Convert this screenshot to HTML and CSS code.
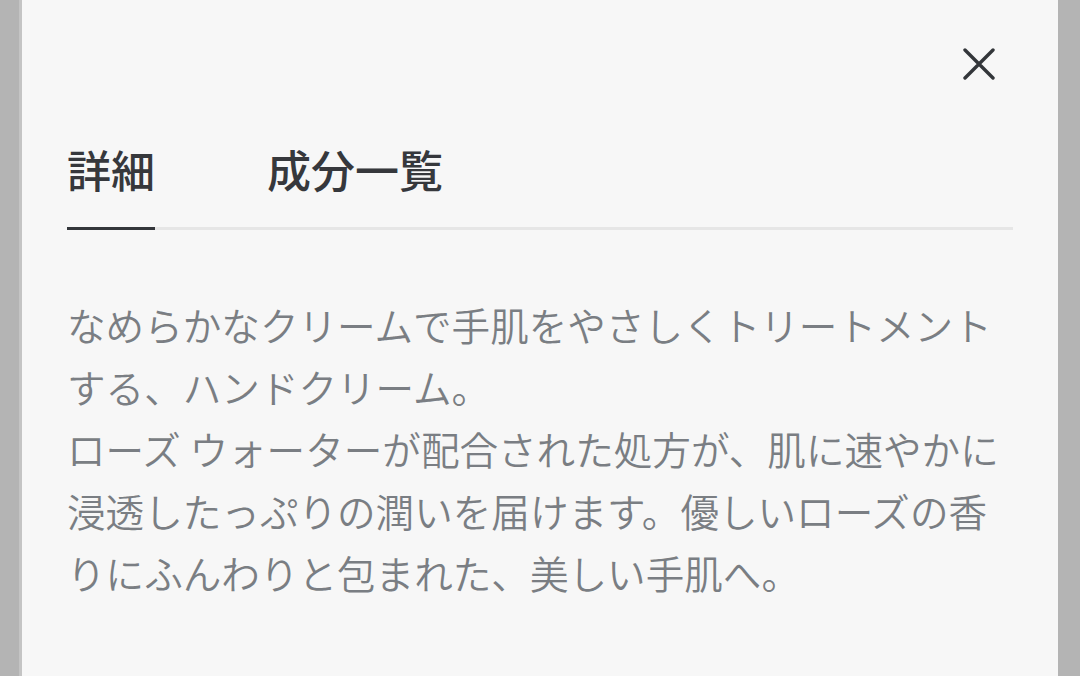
FILE: index.html
```html
<!DOCTYPE html>
<html lang="ja">
<head>
<meta charset="utf-8">
<link rel="stylesheet" href="styles.css">
</head>
<body>
<div class="panel">
  <div class="top">
    <button class="close" aria-label="閉じる">
      <svg width="32" height="32" viewBox="0 0 32 32"><path d="M2 2 L30 30 M30 2 L2 30" stroke="#33363a" stroke-width="3.4" stroke-linecap="round" fill="none"/></svg>
    </button>
  </div>
  <div class="tabs">
    <div class="tab active">詳細</div>
    <div class="tab">成分一覧</div>
  </div>
  <p class="desc">なめらかなクリームで手肌をやさしくトリートメントする、ハンドクリーム。<br>ローズ ウォーターが配合された処方が、肌に速やかに浸透したっぷりの潤いを届けます。優しいローズの香りにふんわりと包まれた、美しい手肌へ。</p>
</div>
</body>
</html>
```
FILE: styles.css
```css
html, body {
  margin: 0;
  padding: 0;
  height: 100%;
}
body {
  background: #b4b4b4;
  font-family: "Noto Sans CJK JP", "Noto Sans", sans-serif;
  overflow: hidden;
}
.panel {
  margin-left: 22px;
  width: 1036px;
  height: 676px;
  box-sizing: border-box;
  background: #f7f7f7;
  padding: 48px 45px 0 45px;
  box-shadow: -3px 0 0 #c4c4c4;
}
.top {
  display: flex;
  justify-content: flex-end;
  height: 32px;
}
.close {
  border: 0;
  background: none;
  padding: 0;
  margin-right: 18px;
  width: 32px;
  height: 32px;
  display: flex;
}
.tabs {
  display: flex;
  gap: 112px;
  margin-top: 67px;
  border-bottom: 3px solid #e6e6e6;
}
.tab {
  font-size: 44px;
  line-height: 44px;
  font-weight: 500;
  color: #36383c;
  padding-bottom: 36px;
  margin-bottom: -3px;
  border-bottom: 3px solid transparent;
}
.tab.active {
  border-bottom-color: #33363a;
}
.desc {
  margin: 63px 0 0 0;
  font-size: 38.6px;
  line-height: 62px;
  letter-spacing: 0;
  font-weight: 350;
  color: #7a7e83;
}
```
